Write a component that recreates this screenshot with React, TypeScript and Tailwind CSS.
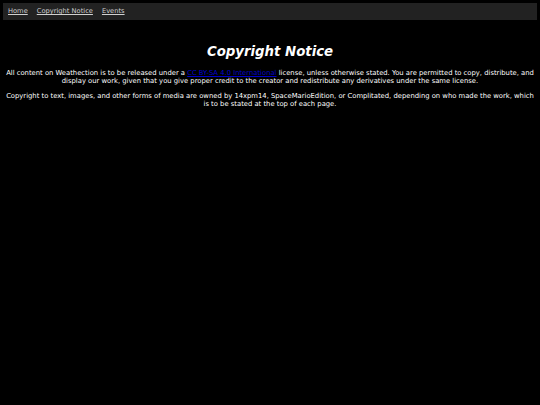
export default function App() {
  return (
    <div className="min-h-[405px] bg-black text-white p-[3px]" style={{ fontFamily: '"DejaVu Sans", Verdana, sans-serif' }}>
      <nav className="bg-[#222222] h-[17px] flex items-center gap-[9px] px-[5px] text-[6.7px] text-[#d0d0d0]">
        <a href="#" className="underline">Home</a>
        <a href="#" className="underline">Copyright Notice</a>
        <a href="#" className="underline">Events</a>
      </nav>
      <h1 className="text-center font-bold italic text-[13.3px] mt-[24px] leading-[16px]">Copyright Notice</h1>
      <p className="text-center text-[6.8px] leading-[8px] mt-[9px] px-[2px]">
        All content on Weathection is to be released under a <a href="#" className="underline text-[#0000cc]">CC BY-SA 4.0 International</a> license, unless otherwise stated. You are permitted to copy, distribute, and display our work, given that you give proper credit to the creator and redistribute any derivatives under the same license.
      </p>
      <p className="text-center text-[6.8px] leading-[8px] mt-[7px] px-[2px]">
        Copyright to text, images, and other forms of media are owned by 14xpm14, SpaceMarioEdition, or Complitated, depending on who made the work, which is to be stated at the top of each page.
      </p>
    </div>
  );
}
